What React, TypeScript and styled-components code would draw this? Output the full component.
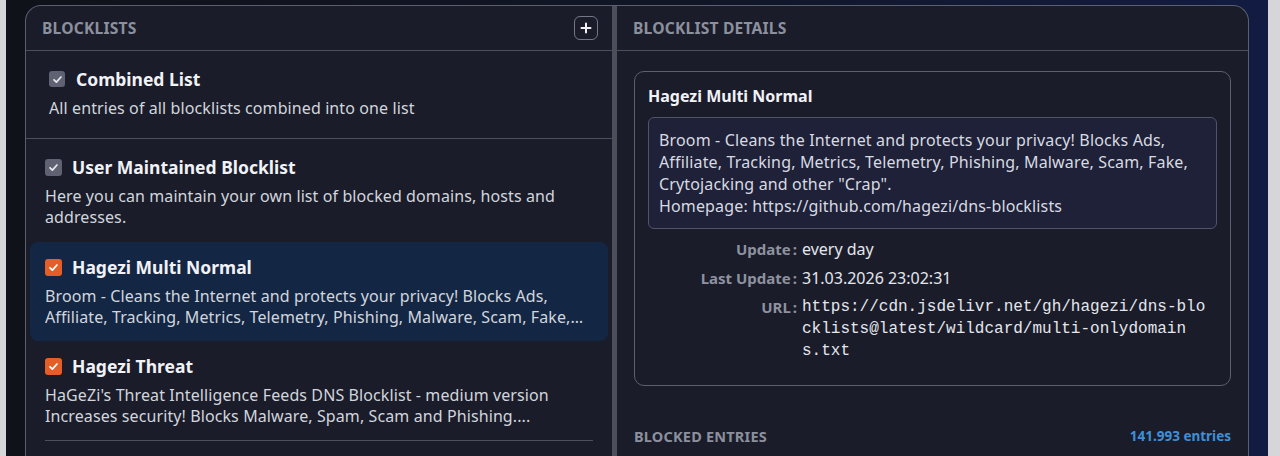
import React from 'react';
import styled, { createGlobalStyle } from 'styled-components';

const GlobalStyle = createGlobalStyle`
  html, body {
    margin: 0;
    padding: 0;
    background: #d6d6d8;
    font-family: "Noto Sans", "Open Sans", sans-serif;
  }
`;

const Screen = styled.div`
  margin: 0 12px 0 6px;
  height: 456px;
  overflow: hidden;
  box-sizing: border-box;
  padding: 5px 19px 0 19px;
  background: linear-gradient(90deg, #10121a 0%, #111627 55%, #121c42 100%);
`;

const Panel = styled.div`
  display: grid;
  grid-template-columns: 586px 5px 1fr;
  height: 460px;
  background: #1a1c2a;
  border: 1px solid #5b5f6e;
  border-bottom: none;
  border-radius: 16px 16px 0 0;
  overflow: hidden;
`;

const Column = styled.div`
  display: flex;
  flex-direction: column;
  min-width: 0;
`;

const Divider = styled.div`
  background: #4c4f59;
`;

const Header = styled.div`
  display: flex;
  align-items: center;
  justify-content: space-between;
  height: 44px;
  padding: 0 14px 0 16px;
  border-bottom: 1px solid #4b4f5e;
  flex-shrink: 0;
`;

const SectionTitle = styled.span<{ $small?: boolean }>`
  font-size: ${p => (p.$small ? '14.5px' : '15.6px')};
  line-height: 20px;
  font-weight: 700;
  letter-spacing: 0.2px;
  text-transform: uppercase;
  color: #8c909d;
`;

const AddButton = styled.button`
  width: 24px;
  height: 24px;
  padding: 0;
  display: flex;
  align-items: center;
  justify-content: center;
  background: transparent;
  border: 1.5px solid #737787;
  border-radius: 6px;
  cursor: pointer;
`;

const CombinedSection = styled.div`
  padding: 16px 23px 19px;
  border-bottom: 1px solid #4b4f5e;
`;

const List = styled.div`
  display: flex;
  flex-direction: column;
  padding: 3px 4px 0;
`;

const Item = styled.div<{ $selected?: boolean }>`
  padding: 0 15px;
  border-radius: 8px;
  background: ${p => (p.$selected ? '#132745' : 'transparent')};
`;

const ItemInner = styled.div<{ $line?: 'show' | 'hide' | 'none' }>`
  padding: 13px 0 13px;
  border-bottom: ${p =>
    p.$line === 'none' ? 'none' : `1px solid ${p.$line === 'show' ? '#4b4f5e' : 'transparent'}`};
`;

const TitleRow = styled.div<{ $gap?: number }>`
  display: flex;
  align-items: center;
  gap: ${p => p.$gap ?? 10}px;
  height: 24px;
  margin-bottom: 7px;
`;

const ItemTitle = styled.span`
  font-size: 17.5px;
  font-weight: 700;
  color: #f1f2f6;
`;

const ItemDesc = styled.div<{ $clamp?: boolean }>`
  font-size: 16px;
  line-height: 21px;
  letter-spacing: 0.1px;
  color: #d2d5dc;
  ${p =>
    p.$clamp &&
    `
    display: -webkit-box;
    -webkit-line-clamp: 2;
    -webkit-box-orient: vertical;
    overflow: hidden;
  `}
`;

const Box = styled.span<{ $checked?: boolean; $size: number }>`
  width: ${p => p.$size}px;
  height: ${p => p.$size}px;
  flex-shrink: 0;
  border-radius: 3px;
  display: flex;
  align-items: center;
  justify-content: center;
  background: ${p => (p.$checked ? '#e35f27' : '#5e6272')};
`;

const Details = styled.div`
  padding: 20px 17px 0;
`;

const Card = styled.div`
  border: 1px solid #5b5f6e;
  border-radius: 10px;
  padding: 13px 13px 23px;
`;

const CardTitle = styled.div`
  font-size: 16px;
  font-weight: 700;
  line-height: 22px;
  color: #f1f2f6;
  margin-bottom: 10px;
`;

const DescBox = styled.div`
  background: #1e2137;
  border: 1px solid #50546a;
  border-radius: 6px;
  padding: 11px 10px;
  font-size: 16px;
  line-height: 22px;
  letter-spacing: 0.15px;
  color: #d8dae2;
`;

const Rows = styled.div`
  display: grid;
  grid-template-columns: 149px 406px;
  column-gap: 5px;
  row-gap: 7px;
  margin-top: 9px;
`;

const Label = styled.div`
  display: flex;
  justify-content: flex-end;
  gap: 2px;
  font-size: 15px;
  font-weight: 700;
  line-height: 22px;
  color: #8e929f;
`;

const Value = styled.div<{ $mono?: boolean }>`
  font-family: ${p => (p.$mono ? '"Liberation Mono", monospace' : 'inherit')};
  font-size: 16px;
  line-height: 22px;
  color: #e4e6ec;
  word-break: break-all;
`;

const NoBreak = styled.span`
  white-space: nowrap;
`;

const EntriesBar = styled.div`
  display: flex;
  align-items: center;
  justify-content: space-between;
  margin-top: 40px;
`;

const EntriesCount = styled.span`
  font-size: 13.5px;
  line-height: 20px;
  font-weight: 700;
  color: #3f8fd8;
`;

const Check: React.FC<{ checked?: boolean; size?: number }> = ({ checked, size = 17 }) => (
  <Box $checked={checked} $size={size}>
    <svg width="11" height="11" viewBox="0 0 12 12" fill="none">
      <path
        d="M2.2 6.3 4.8 8.8 9.8 3.3"
        stroke={checked ? '#ffffff' : '#e6e7ec'}
        strokeWidth="1.9"
        strokeLinecap="round"
        strokeLinejoin="round"
      />
    </svg>
  </Box>
);

const Url: React.FC<{ href: string }> = ({ href }) => (
  <>
    {href.split(/(.\.[a-z])/).map((part, i) => (i % 2 ? <NoBreak key={i}>{part}</NoBreak> : part))}
  </>
);

const blocklists = [
  {
    name: 'User Maintained Blocklist',
    desc: 'Here you can maintain your own list of blocked domains, hosts and addresses.',
    custom: true,
  },
  {
    name: 'Hagezi Multi Normal',
    desc: 'Broom - Cleans the Internet and protects your privacy! Blocks Ads, Affiliate, Tracking, Metrics, Telemetry, Phishing, Malware, Scam, Fake, Crytojacking and other "Crap".',
    selected: true,
  },
  {
    name: 'Hagezi Threat',
    desc: "HaGeZi's Threat Intelligence Feeds DNS Blocklist - medium version Increases security! Blocks Malware, Spam, Scam and Phishing....",
  },
];

const App: React.FC = () => {
  return (
    <>
      <GlobalStyle />
      <Screen>
        <Panel>
          <Column>
            <Header>
              <SectionTitle>Blocklists</SectionTitle>
              <AddButton>
                <svg width="12" height="12" viewBox="0 0 12 12">
                  <path d="M6 1.5v9M1.5 6h9" stroke="#f2f2f5" strokeWidth="2" strokeLinecap="round" />
                </svg>
              </AddButton>
            </Header>
            <CombinedSection>
              <TitleRow $gap={11}>
                <Check size={16} />
                <ItemTitle>Combined List</ItemTitle>
              </TitleRow>
              <ItemDesc>All entries of all blocklists combined into one list</ItemDesc>
            </CombinedSection>
            <List>
              {blocklists.map((b, i) => {
                const nextSelected = blocklists[i + 1]?.selected;
                const line = b.selected ? 'none' : nextSelected ? 'hide' : 'show';
                return (
                  <Item key={b.name} $selected={b.selected}>
                    <ItemInner $line={line}>
                      <TitleRow>
                        <Check checked={!b.custom} />
                        <ItemTitle>{b.name}</ItemTitle>
                      </TitleRow>
                      <ItemDesc $clamp>{b.desc}</ItemDesc>
                    </ItemInner>
                  </Item>
                );
              })}
            </List>
          </Column>
          <Divider />
          <Column>
            <Header>
              <SectionTitle>Blocklist Details</SectionTitle>
            </Header>
            <Details>
              <Card>
                <CardTitle>Hagezi Multi Normal</CardTitle>
                <DescBox>
                  Broom - Cleans the Internet and protects your privacy! Blocks Ads, Affiliate, Tracking, Metrics,
                  Telemetry, Phishing, Malware, Scam, Fake, Crytojacking and other "Crap".
                  <br />
                  Homepage: https://github.com/hagezi/dns-blocklists
                </DescBox>
                <Rows>
                  <Label>
                    <span>Update</span>
                    <span>:</span>
                  </Label>
                  <Value>every day</Value>
                  <Label>
                    <span>Last Update</span>
                    <span>:</span>
                  </Label>
                  <Value>31.03.2026 23:02:31</Value>
                  <Label>
                    <span>URL</span>
                    <span>:</span>
                  </Label>
                  <Value $mono>
                    <Url href="https://cdn.jsdelivr.net/gh/hagezi/dns-blocklists@latest/wildcard/multi-onlydomains.txt" />
                  </Value>
                </Rows>
              </Card>
              <EntriesBar>
                <SectionTitle $small>Blocked Entries</SectionTitle>
                <EntriesCount>141.993 entries</EntriesCount>
              </EntriesBar>
            </Details>
          </Column>
        </Panel>
      </Screen>
    </>
  );
};

export default App;
